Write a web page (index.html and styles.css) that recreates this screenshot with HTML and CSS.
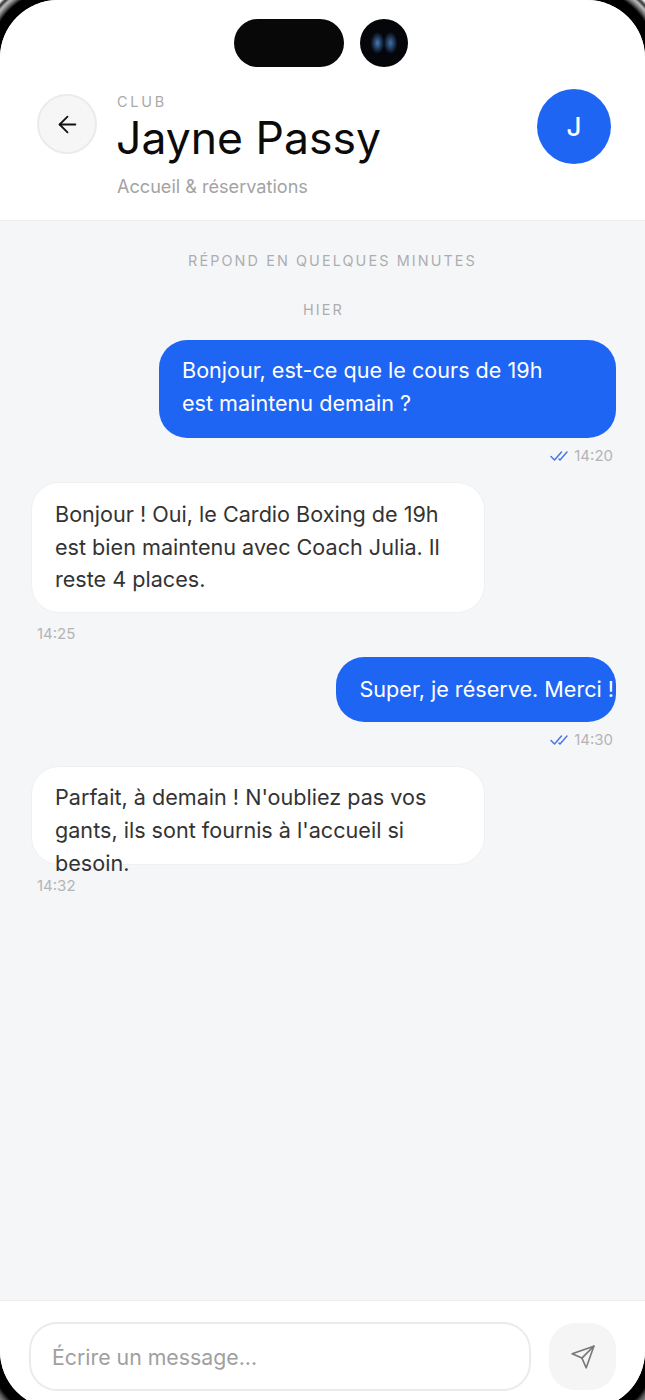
FILE: index.html
```html
<!DOCTYPE html>
<html lang="fr">
<head>
    <meta charset="UTF-8">
    <meta name="viewport" content="width=device-width, initial-scale=1.0">
    <title>Jayne Passy</title>
    <link rel="stylesheet" href="styles.css">
</head>
<body>
    <div class="screen">
        <header class="chat-header">
            <div class="island">
                <div class="island-pill"></div>
                <div class="island-camera"></div>
            </div>
            <div class="header-row">
                <button class="back-btn">
                    <svg width="27" height="27" viewBox="0 0 24 24" fill="none" stroke="currentColor" stroke-width="1.6" stroke-linecap="round" stroke-linejoin="round"><path d="M19 12H5"/><path d="m12 19-7-7 7-7"/></svg>
                </button>
                <div class="contact">
                    <div class="contact-label">CLUB</div>
                    <h1 class="contact-name">Jayne Passy</h1>
                    <div class="contact-role">Accueil &amp; réservations</div>
                </div>
                <div class="avatar">J</div>
            </div>
        </header>

        <main class="messages">
            <div class="status">RÉPOND EN QUELQUES MINUTES</div>
            <div class="day">HIER</div>

            <div class="msg msg-out msg-wide">Bonjour, est-ce que le cours de 19h est maintenu demain ?</div>
            <div class="meta meta-out">
                <svg class="ticks" width="18" height="12" viewBox="0 0 18 12" fill="none" stroke="currentColor" stroke-width="1.5" stroke-linecap="round" stroke-linejoin="round"><path d="M1 6.500 4.500 10 11.500 2"/><path d="M9 9 10 10 17 2"/></svg>
                14:20
            </div>

            <div class="msg msg-in">Bonjour ! Oui, le Cardio Boxing de 19h est bien maintenu avec Coach Julia. Il reste 4 places.</div>
            <div class="meta meta-in">14:25</div>

            <div class="msg msg-out msg-short">Super, je réserve. Merci !</div>
            <div class="meta meta-out">
                <svg class="ticks" width="18" height="12" viewBox="0 0 18 12" fill="none" stroke="currentColor" stroke-width="1.5" stroke-linecap="round" stroke-linejoin="round"><path d="M1 6.500 4.500 10 11.500 2"/><path d="M9 9 10 10 17 2"/></svg>
                14:30
            </div>

            <div class="msg msg-in msg-clipped">Parfait, à demain ! N'oubliez pas vos gants, ils sont fournis à l'accueil si besoin.</div>
            <div class="meta meta-in">14:32</div>
        </main>

        <footer class="composer">
            <div class="composer-input">Écrire un message...</div>
            <button class="send-btn">
                <svg width="26" height="26" viewBox="0 0 24 24" fill="none" stroke="currentColor" stroke-width="1.5" stroke-linecap="round" stroke-linejoin="round"><path d="m22 2-7 20-4-9-9-4Z"/><path d="M22 2 11 13"/></svg>
            </button>
        </footer>
    </div>
</body>
</html>
```

FILE: styles.css
```css
* {
    margin: 0;
    padding: 0;
    box-sizing: border-box;
    font-family: Inter, "Liberation Sans", sans-serif;
}

/* phone bezel shows in the four corners */
body {
    height: 1400px;
    overflow: hidden;
    background-color: #000;
    background-repeat: no-repeat;
    background-size: 80px 80px;
    background-position: left top, right top, left bottom, right bottom;
    background-image:
        radial-gradient(circle at 58px 58px, #000 0 68px, #777 72px, #bbb 75px, #333 78px, #eee 81px),
        radial-gradient(circle at 22px 58px, #000 0 68px, #777 72px, #bbb 75px, #333 78px, #eee 81px),
        radial-gradient(circle at 58px 31px, #000 0 68px, #555 72px, #888 76px),
        radial-gradient(circle at 22px 31px, #000 0 68px, #555 72px, #888 76px);
}

.screen {
    height: 1409px;
    display: flex;
    flex-direction: column;
    background-color: #f5f6f8;
    border-radius: 58px;
    overflow: hidden;
}

/* Header */
.chat-header {
    height: 221px;
    flex-shrink: 0;
    background-color: #fff;
    border-bottom: 1px solid #ececee;
    padding-top: 19px;
}

.island {
    display: flex;
    justify-content: center;
    gap: 16px;
    padding-right: 3px;
}

.island-pill {
    width: 110px;
    height: 48px;
    border-radius: 24px;
    background-color: #080808;
}

.island-camera {
    width: 48px;
    height: 48px;
    border-radius: 50%;
    background-color: #05060a;
    background-image:
        radial-gradient(ellipse 7px 11px at 17.5px 24px, #4a7cb6 0, rgba(40, 75, 120, 0.7) 55%, transparent 100%),
        radial-gradient(ellipse 7px 11px at 30.5px 24px, #44719f 0, rgba(40, 75, 120, 0.7) 55%, transparent 100%);
}

.header-row {
    display: flex;
    align-items: flex-start;
    padding: 22px 34px 0 37px;
}

.back-btn {
    width: 60px;
    height: 60px;
    flex-shrink: 0;
    margin-top: 5px;
    border-radius: 50%;
    border: 2px solid #ebebeb;
    background-color: #f6f6f6;
    color: #111;
    display: flex;
    align-items: center;
    justify-content: center;
}

.contact {
    flex: 1;
    padding: 4px 0 0 20px;
}

.contact-label {
    font-size: 14.4px;
    line-height: 17px;
    letter-spacing: 2.8px;
    color: #a9a9a9;
}

.contact-name {
    font-size: 44.5px;
    font-weight: 400;
    line-height: 54px;
    margin: 1px 0 0 -1px;
    color: #0b0b0b;
}

.contact-role {
    font-size: 18.1px;
    line-height: 24px;
    margin-top: 9px;
    color: #a3a3a3;
}

.avatar {
    width: 74px;
    height: 75px;
    flex-shrink: 0;
    border-radius: 50%;
    background-color: #1f65f4;
    color: #fff;
    font-size: 26px;
    font-weight: 500;
    display: flex;
    align-items: center;
    justify-content: center;
}

/* Messages */
.messages {
    flex: 1;
    display: flex;
    flex-direction: column;
    padding: 31px 29px 0 31px;
}

.status,
.day {
    text-align: center;
    color: #adadb0;
    font-size: 14.4px;
    line-height: 18px;
    letter-spacing: 2.1px;
}

.status {
    padding-left: 18px;
}

.day {
    margin: 31px 0 4px;
}

.msg {
    font-size: 21.6px;
    line-height: 32.7px;
    border-radius: 28px;
    margin-top: 17px;
}

.msg-out {
    align-self: flex-end;
    background-color: #1f65f4;
    color: #fff;
    padding: 14px 2px 18.6px 23px;
}

.msg-wide {
    width: 457px;
    padding-right: 60px;
}

.msg-short {
    padding-top: 16px;
    padding-bottom: 16.6px;
}

.msg-in {
    align-self: flex-start;
    width: 454px;
    background-color: #fff;
    border: 1px solid #f0f0f2;
    color: #333;
    padding: 15px 23px 16px;
}

.msg-clipped {
    height: 99px;
    padding-top: 14px;
}

.meta {
    font-size: 15px;
    line-height: 18px;
    color: #b4b4b6;
    margin-top: 9px;
}

.meta-out {
    align-self: flex-end;
    display: flex;
    align-items: center;
    gap: 6px;
    padding-right: 3px;
}

.meta-in {
    padding-left: 6px;
    margin: 12px 0 -3px;
}

.ticks {
    color: #4a78e0;
}

/* Composer */
.composer {
    height: 109px;
    flex-shrink: 0;
    background-color: #fff;
    border-top: 1px solid #ececee;
    display: flex;
    align-items: flex-start;
    gap: 18px;
    padding: 21px 29px 0;
}

.composer-input {
    flex: 1;
    height: 69px;
    border: 2px solid #ebebeb;
    border-radius: 28px;
    padding-left: 21px;
    font-size: 21.3px;
    line-height: 66px;
    color: #a0a0a0;
}

.send-btn {
    width: 67px;
    height: 67px;
    flex-shrink: 0;
    margin-top: 1px;
    border: none;
    border-radius: 26px;
    background-color: #f5f5f5;
    color: #777;
    display: flex;
    align-items: center;
    justify-content: center;
}
```
